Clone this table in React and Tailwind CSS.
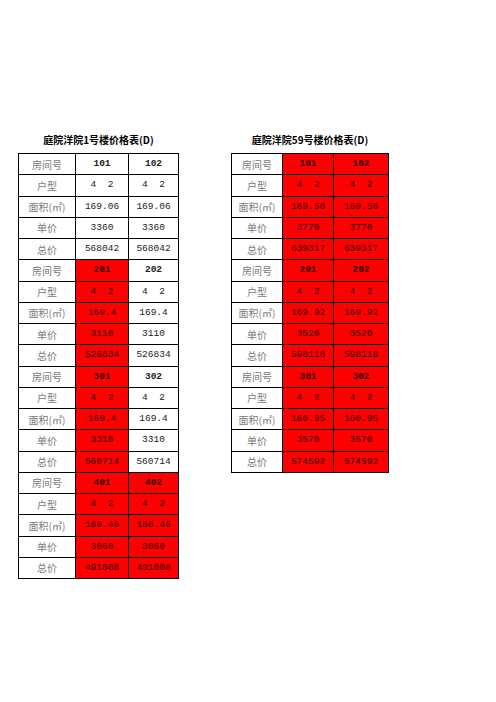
const left = [
  { no: ["101", "102"], type: ["4  2", "4  2"], area: ["169.06", "169.06"], unit: ["3360", "3360"], total: ["568042", "568042"], red: [false, false] },
  { no: ["201", "202"], type: ["4  2", "4  2"], area: ["169.4", "169.4"], unit: ["3110", "3110"], total: ["526834", "526834"], red: [true, false] },
  { no: ["301", "302"], type: ["4  2", "4  2"], area: ["169.4", "169.4"], unit: ["3310", "3310"], total: ["560714", "560714"], red: [true, false] },
  { no: ["401", "402"], type: ["4  2", "4  2"], area: ["160.46", "160.46"], unit: ["3060", "3060"], total: ["491008", "491008"], red: [true, true] },
];
const right = [
  { no: ["101", "102"], type: ["4  2", "4  2"], area: ["169.58", "169.58"], unit: ["3770", "3770"], total: ["639317", "639317"], red: [true, true] },
  { no: ["201", "202"], type: ["4  2", "4  2"], area: ["169.92", "169.92"], unit: ["3520", "3520"], total: ["598118", "598118"], red: [true, true] },
  { no: ["301", "302"], type: ["4  2", "4  2"], area: ["160.95", "160.95"], unit: ["3570", "3570"], total: ["574592", "574592"], red: [true, true] },
];

const labels = [
  ["房间号", "no"],
  ["户型", "type"],
  ["面积(㎡)", "area"],
  ["单价", "unit"],
  ["总价", "total"],
];

function Table({ title, data, cols }) {
  return (
    <div className="flex flex-col items-center">
      <div
        className="h-[12px] leading-[12px] text-[10px] font-bold text-black mb-[7px] whitespace-nowrap"
        style={{ fontFamily: '"Noto Sans CJK SC", sans-serif' }}
      >
        {title}
      </div>
      <div className={`grid ${cols} border-l border-t border-black`}>
        {data.map((g, gi) =>
          labels.map(([lab, key]) => (
            <div key={gi + key} className="contents">
              <div
                className="h-[21.25px] border-r border-b border-black flex items-center justify-center text-[10px] text-[#7a7a7a] bg-white"
                style={{ fontFamily: '"Noto Sans CJK SC", sans-serif' }}
              >
                {lab}
              </div>
              {[0, 1].map((c) => (
                <div
                  key={c}
                  className={`h-[21.25px] border-r border-b border-black flex items-center justify-center text-[9.5px] whitespace-pre ${
                    g.red[c] ? "bg-[#ff0000] text-[#2a0000]" : "bg-white text-[#222]"
                  } ${key === "no" ? "font-bold" : ""}`}
                  style={{ fontFamily: '"Liberation Mono", monospace' }}
                >
                  {g[key][c]}
                </div>
              ))}
            </div>
          ))
        )}
      </div>
    </div>
  );
}

export default function App() {
  return (
    <div className="w-[496px] h-[702px] bg-white flex items-start pl-[18px] pt-[134px] gap-[52px]">
      <Table title="庭院洋院1号楼价格表(D)" data={left} cols="grid-cols-[57px_53px_50px]" />
      <Table title="庭院洋院59号楼价格表(D)" data={right} cols="grid-cols-[51px_51px_55px]" />
    </div>
  );
}
